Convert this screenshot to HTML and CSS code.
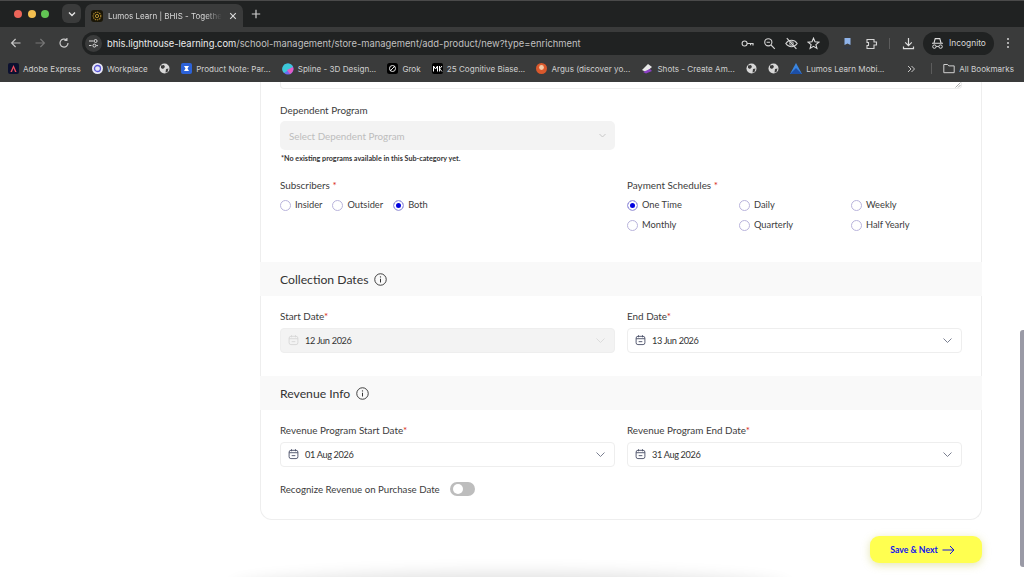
FILE: index.html
```html
<!DOCTYPE html>
<html lang="en">

<head>
  <meta charset="UTF-8">
  <meta name="viewport" content="width=device-width, initial-scale=1.0">
  <title>Lumos Learn | BHIS</title>
  <link rel="stylesheet" href="styles.css">
</head>

<body>
  <header class="browser">
    <div class="tabstrip">
      <div class="traffic">
        <span class="dot red"></span>
        <span class="dot yellow"></span>
        <span class="dot green"></span>
      </div>
      <div class="tabsearch">
        <svg width="10" height="10" viewBox="0 0 10 10"><path d="M2 3.5 5 6.5 8 3.5" fill="none" stroke="#e4e4e4" stroke-width="1.4"/></svg>
      </div>
      <div class="tab">
        <svg class="favicon" width="12" height="12" viewBox="0 0 12 12">
          <rect width="12" height="12" rx="3" fill="#1a1608"/>
          <circle cx="6" cy="6" r="3.8" fill="none" stroke="#a8842a" stroke-width="1.2" stroke-dasharray="1.4 .8"/>
          <circle cx="6" cy="6" r="1.6" fill="none" stroke="#c79f35" stroke-width=".9"/>
        </svg>
        <span class="tabtitle">Lumos Learn | BHIS - Togethe</span>
        <svg class="tabclose" width="8" height="8" viewBox="0 0 8 8"><path d="M1.2 1.2 6.8 6.8M6.8 1.2 1.2 6.8" stroke="#dcdcdc" stroke-width="1.1"/></svg>
      </div>
      <svg class="newtab" width="10" height="10" viewBox="0 0 10 10"><path d="M5 .8V9.2M.8 5H9.2" stroke="#cfcfcf" stroke-width="1.2"/></svg>
    </div>

    <div class="toolbar">
      <svg class="navicon" width="12" height="12" viewBox="0 0 12 12"><path d="M10.5 6H1.8M5.6 2 1.6 6 5.6 10" fill="none" stroke="#c8c8c8" stroke-width="1.2"/></svg>
      <svg class="navicon" width="12" height="12" viewBox="0 0 12 12"><path d="M1.5 6H10.2M6.4 2 10.4 6 6.4 10" fill="none" stroke="#767676" stroke-width="1.2"/></svg>
      <svg class="navicon" width="12" height="12" viewBox="0 0 12 12"><path d="M10 6A4 4 0 1 1 8.6 3M8.9 .9V3.4H6.4" fill="none" stroke="#c8c8c8" stroke-width="1.2"/></svg>
      <div class="omnibox">
        <span class="sitebtn">
          <svg width="11" height="11" viewBox="0 0 11 11"><path d="M1 3H5.5M1 7.5H3.5" stroke="#d8d8d8" stroke-width="1.1"/><circle cx="7.6" cy="3" r="1.5" fill="none" stroke="#d8d8d8"/><circle cx="6.4" cy="7.6" r="1.5" fill="none" stroke="#d8d8d8"/><path d="M8.2 7.6H10" stroke="#d8d8d8"/></svg>
        </span>
        <span class="url">bhis.lighthouse-learning.com<span class="urlpath">/school-management/store-management/add-product/new?type=enrichment</span></span>
        <div class="omni-icons">
          <svg width="13" height="13" viewBox="0 0 13 13"><circle cx="3.6" cy="6.5" r="2.5" fill="none" stroke="#d4d4d4" stroke-width="1.1"/><path d="M6 6.5H12V8.6M9.6 6.5V8.2" fill="none" stroke="#d4d4d4" stroke-width="1.2"/></svg>
          <svg width="13" height="13" viewBox="0 0 13 13"><circle cx="5.3" cy="5.3" r="3.6" fill="none" stroke="#d4d4d4" stroke-width="1.1"/><path d="M8 8 11.8 11.8M3.6 5.3H7" stroke="#d4d4d4" stroke-width="1.1"/></svg>
          <svg width="13" height="13" viewBox="0 0 13 13"><path d="M.8 6.5C3.6 2.2 9.4 2.2 12.2 6.5 9.4 10.8 3.6 10.8.8 6.5Z" fill="none" stroke="#d4d4d4" stroke-width="1.1"/><circle cx="6.5" cy="6.5" r="1.8" fill="none" stroke="#d4d4d4"/><path d="M1.8 1.2 11.4 11.8" stroke="#d4d4d4" stroke-width="1.2"/></svg>
          <svg width="13" height="13" viewBox="0 0 13 13"><path d="M6.5 1.2 8 4.8 11.9 5.1 8.9 7.6 9.9 11.4 6.5 9.4 3.1 11.4 4.1 7.6 1.1 5.1 5 4.8Z" fill="none" stroke="#dedede" stroke-width="1.1"/></svg>
        </div>
      </div>
      <svg class="ext" width="11" height="13" viewBox="0 0 11 13"><path d="M2.5 1H8.5V8L5.5 6.4 2.5 8Z" fill="#8fb4ea"/><rect x="2" y="9.5" width="7" height="2.5" fill="#333a46"/></svg>
      <svg class="puzzle" width="13" height="13" viewBox="0 0 13 13"><path d="M2 2.5H9V5H11.5V8H9V11.5H2V8.5H3.5V5.5H2Z" fill="none" stroke="#d4d4d4" stroke-width="1.1"/></svg>
      <span class="tool-sep"></span>
      <svg class="download" width="13" height="13" viewBox="0 0 13 13"><path d="M6.5 1V8.4M3.2 5.4 6.5 8.7 9.8 5.4M1.5 9.5V11.6H11.5V9.5" fill="none" stroke="#dedede" stroke-width="1.2"/></svg>
      <div class="incognito">
        <svg width="13" height="13" viewBox="0 0 13 13"><path d="M1 6.2H12M3 5.8 4.2 1.6H8.8L10 5.8" fill="none" stroke="#dedede" stroke-width="1.1"/><circle cx="3.4" cy="9.6" r="1.7" fill="none" stroke="#dedede"/><circle cx="9.6" cy="9.6" r="1.7" fill="none" stroke="#dedede"/><path d="M5.1 9.4H7.9" stroke="#dedede"/></svg>
        <span>Incognito</span>
      </div>
      <svg class="kebab" width="4" height="12" viewBox="0 0 4 12"><circle cx="2" cy="2" r="1" fill="#d4d4d4"/><circle cx="2" cy="6" r="1" fill="#d4d4d4"/><circle cx="2" cy="10" r="1" fill="#d4d4d4"/></svg>
    </div>

    <div class="bookmarks">
      <a class="bm bm-adobe">
        <svg width="11" height="11" viewBox="0 0 11 11"><rect width="11" height="11" rx="2" fill="#0c1130"/><path d="M5.5 2 8.6 9H7L5.5 5 4 9H2.4Z" fill="#ef4b5d"/></svg>
        Adobe Express</a>
      <a class="bm bm-work">
        <svg width="11" height="11" viewBox="0 0 11 11"><circle cx="5.5" cy="5.5" r="5.5" fill="#e8e8f6"/><circle cx="5.5" cy="5.5" r="3" fill="none" stroke="#5a55d6" stroke-width="1.3"/></svg>
        Workplace</a>
      <a class="bm bm-globe">
        <svg width="11" height="11" viewBox="0 0 11 11"><circle cx="5.5" cy="5.5" r="5" fill="#d8d8d8"/><path d="M2 2.5 5 2 6 4 4 6 2 5ZM7 6 9.5 5.5 8.5 9 6.5 9.5Z" fill="#3c3c3c"/></svg>
      </a>
      <a class="bm bm-note">
        <svg width="11" height="11" viewBox="0 0 11 11"><rect width="11" height="11" rx="2" fill="#2c62d8"/><path d="M3 3H8L6.5 5.5 8 8H3L4.5 5.5Z" fill="#fff"/></svg>
        Product Note: Par...</a>
      <a class="bm bm-spline">
        <svg width="12" height="12" viewBox="0 0 12 12"><circle cx="6" cy="6" r="5.5" fill="#6d6cf0"/><path d="M6 .5A5.5 5.5 0 0 1 11 4L2 10A5.5 5.5 0 0 1 6 .5Z" fill="#3cc7d8"/><path d="M11 4A5.5 5.5 0 0 1 8 11L5 7Z" fill="#e35cc4"/></svg>
        Spline - 3D Design...</a>
      <a class="bm bm-grok">
        <svg width="11" height="11" viewBox="0 0 11 11"><rect width="11" height="11" rx="2.5" fill="#000"/><circle cx="5.5" cy="5.5" r="3" fill="none" stroke="#e4e4e4"/><path d="M3 8 8 3" stroke="#e4e4e4"/></svg>
        Grok</a>
      <a class="bm bm-cog">
        <svg width="11" height="11" viewBox="0 0 11 11"><rect width="11" height="11" rx="2" fill="#000"/><path d="M1.5 8.5V3L3.5 6 5.5 3V8.5M7.5 3V8.5M10 3 7.7 5.8 10 8.5" fill="none" stroke="#fff" stroke-width="1"/></svg>
        25 Cognitive Biase...</a>
      <a class="bm bm-argus">
        <svg width="11" height="11" viewBox="0 0 11 11"><circle cx="5.5" cy="5.5" r="5.5" fill="#d9582c"/><circle cx="5.5" cy="4.5" r="2.4" fill="#f2c9a6"/></svg>
        Argus (discover yo...</a>
      <a class="bm bm-shots">
        <svg width="12" height="11" viewBox="0 0 12 11"><path d="M1 7 7 1 11 4 5 9Z" fill="#e8e8e8"/><path d="M2 9 9 6 11 8 5 10.5Z" fill="#8b3fc4"/></svg>
        Shots - Create Am...</a>
      <a class="bm bm-globe">
        <svg width="11" height="11" viewBox="0 0 11 11"><circle cx="5.5" cy="5.5" r="5" fill="#d8d8d8"/><path d="M2 2.5 5 2 6 4 4 6 2 5ZM7 6 9.5 5.5 8.5 9 6.5 9.5Z" fill="#3c3c3c"/></svg>
      </a>
      <a class="bm bm-globe">
        <svg width="11" height="11" viewBox="0 0 11 11"><circle cx="5.5" cy="5.5" r="5" fill="#d8d8d8"/><path d="M2 2.5 5 2 6 4 4 6 2 5ZM7 6 9.5 5.5 8.5 9 6.5 9.5Z" fill="#3c3c3c"/></svg>
      </a>
      <a class="bm bm-lumos">
        <svg width="12" height="11" viewBox="0 0 12 11"><path d="M6 0 12 11H0Z" fill="#3a86e0"/><path d="M6 5 12 11H0Z" fill="#1c4fa8"/></svg>
        Lumos Learn Mobi...</a>
      <div class="bm-end">
        <svg width="8" height="8" viewBox="0 0 8 8"><path d="M1 1 4 4 1 7M4.5 1 7.5 4 4.5 7" fill="none" stroke="#c8c8c8"/></svg>
        <span class="bm-sep"></span>
        <a class="bm bm-all">
          <svg width="12" height="11" viewBox="0 0 12 11"><path d="M.8 1.5H4.6L5.8 2.9H11.2V9.7H.8Z" fill="none" stroke="#cfcfcf" stroke-width="1"/></svg>
          All Bookmarks</a>
      </div>
    </div>
  </header>

  <main class="page">
    <div class="page-inner">
      <section class="card">
        <div class="textarea-end">
          <svg width="6" height="6" viewBox="0 0 6 6"><path d="M.5 5.5 5.5.5M3 5.5 5.5 3" stroke="#8a8a8a" stroke-width=".7"/></svg>
        </div>

        <div class="body-top">
          <div class="field-half">
            <label class="label">Dependent Program</label>
            <div class="select disabled">
              <span>Select Dependent Program</span>
              <svg class="chev" width="9" height="9" viewBox="0 0 9 9"><path d="M1.5 3 4.5 6 7.5 3" fill="none" stroke="#c8c8c8"/></svg>
            </div>
            <p class="note">*No existing programs available in this Sub-category yet.</p>
          </div>

          <div class="two-col options">
            <div>
              <label class="label">Subscribers <em>*</em></label>
              <div class="radio-inline">
                <span class="radio"><i></i>Insider</span>
                <span class="radio"><i></i>Outsider</span>
                <span class="radio on"><i></i>Both</span>
              </div>
            </div>
            <div>
              <label class="label">Payment Schedules <em>*</em></label>
              <div class="radio-grid">
                <span class="radio on"><i></i>One Time</span>
                <span class="radio"><i></i>Daily</span>
                <span class="radio"><i></i>Weekly</span>
                <span class="radio"><i></i>Monthly</span>
                <span class="radio"><i></i>Quarterly</span>
                <span class="radio"><i></i>Half Yearly</span>
              </div>
            </div>
          </div>
        </div>

        <div class="band">
          <h2>Collection Dates</h2>
          <svg width="13" height="13" viewBox="0 0 14 14"><circle cx="7" cy="7" r="6.2" fill="none" stroke="#333" stroke-width="1"/><path d="M7 6.2V10.2" stroke="#333" stroke-width="1.1"/><circle cx="7" cy="4.2" r=".7" fill="#333"/></svg>
        </div>
        <div class="two-col dates">
          <div>
            <label class="label">Start Date<em>*</em></label>
            <div class="date disabled">
              <svg width="11" height="12" viewBox="0 0 12 12"><rect x="1.2" y="2" width="9.6" height="9" rx="2" fill="none" stroke="#d6d6d6"/><path d="M1.2 4.6H10.8M3.8 .8V3M8.2 .8V3M4 7.8H8" stroke="#d6d6d6"/></svg>
              <span>12 Jun 2026</span>
              <svg class="chev" width="11" height="11" viewBox="0 0 11 11"><path d="M1.5 3.5 5.5 7.5 9.5 3.5" fill="none" stroke="#dcdcdc"/></svg>
            </div>
          </div>
          <div>
            <label class="label">End Date<em>*</em></label>
            <div class="date">
              <svg width="11" height="12" viewBox="0 0 12 12"><rect x="1.2" y="2" width="9.6" height="9" rx="2" fill="none" stroke="#4a5068"/><path d="M1.2 4.6H10.8M3.8 .8V3M8.2 .8V3M4 7.8H8" stroke="#4a5068"/></svg>
              <span>13 Jun 2026</span>
              <svg class="chev" width="11" height="11" viewBox="0 0 11 11"><path d="M1.5 3.5 5.5 7.5 9.5 3.5" fill="none" stroke="#7a7f90"/></svg>
            </div>
          </div>
        </div>

        <div class="band">
          <h2>Revenue Info</h2>
          <svg width="13" height="13" viewBox="0 0 14 14"><circle cx="7" cy="7" r="6.2" fill="none" stroke="#333" stroke-width="1"/><path d="M7 6.2V10.2" stroke="#333" stroke-width="1.1"/><circle cx="7" cy="4.2" r=".7" fill="#333"/></svg>
        </div>
        <div class="two-col dates">
          <div>
            <label class="label">Revenue Program Start Date<em>*</em></label>
            <div class="date">
              <svg width="11" height="12" viewBox="0 0 12 12"><rect x="1.2" y="2" width="9.6" height="9" rx="2" fill="none" stroke="#4a5068"/><path d="M1.2 4.6H10.8M3.8 .8V3M8.2 .8V3M4 7.8H8" stroke="#4a5068"/></svg>
              <span>01 Aug 2026</span>
              <svg class="chev" width="11" height="11" viewBox="0 0 11 11"><path d="M1.5 3.5 5.5 7.5 9.5 3.5" fill="none" stroke="#7a7f90"/></svg>
            </div>
          </div>
          <div>
            <label class="label">Revenue Program End Date<em>*</em></label>
            <div class="date">
              <svg width="11" height="12" viewBox="0 0 12 12"><rect x="1.2" y="2" width="9.6" height="9" rx="2" fill="none" stroke="#4a5068"/><path d="M1.2 4.6H10.8M3.8 .8V3M8.2 .8V3M4 7.8H8" stroke="#4a5068"/></svg>
              <span>31 Aug 2026</span>
              <svg class="chev" width="11" height="11" viewBox="0 0 11 11"><path d="M1.5 3.5 5.5 7.5 9.5 3.5" fill="none" stroke="#7a7f90"/></svg>
            </div>
          </div>
        </div>
        <div class="recognize">
          <span>Recognize Revenue on Purchase Date</span>
          <span class="toggle"></span>
        </div>
      </section>

      <div class="actions">
        <button class="save">Save &amp; Next
          <svg width="13" height="10" viewBox="0 0 13 10"><path d="M.5 5H12M8 1 12 5 8 9" fill="none" stroke="#1414e0" stroke-width="1"/></svg>
        </button>
      </div>
    </div>
    <div class="bottom-fade"></div>
    <div class="scrollbar"></div>
  </main>
</body>

</html>
```

FILE: styles.css
```css
* {
  margin: 0;
  padding: 0;
  box-sizing: border-box;
}

html,
body {
  width: 1024px;
  height: 577px;
  overflow: hidden;
}

body {
  font-family: Lato, "Open Sans", sans-serif;
  background: #fff;
  color: #333;
}

/* browser chrome */
.browser {
  height: 82px;
  font-family: Inter, "Liberation Sans", sans-serif;
  color: #d8d8d8;
}

.tabstrip {
  height: 27px;
  background: #202222;
  border-top: 1px solid #4a4a4a;
  display: flex;
  align-items: center;
  padding: 0 0 1px 14px;
}

.traffic {
  display: flex;
  gap: 5.5px;
  width: 48px;
}

.dot {
  width: 8px;
  height: 8px;
  border-radius: 50%;
}

.red { background: #ec6559; }
.yellow { background: #f4bf4f; }
.green { background: #62c554; }

.tabsearch {
  width: 19px;
  height: 19px;
  border-radius: 6px;
  background: #3a3b3b;
  display: flex;
  align-items: center;
  justify-content: center;
}

.tab {
  width: 158px;
  height: 23px;
  margin: 0 0 -1px 4px;
  padding: 0 10px 0 6px;
  background: #3a3b3b;
  border-radius: 7px 7px 0 0;
  align-self: flex-end;
  display: flex;
  align-items: center;
  font-size: 8px;
}

.favicon,
.tabclose {
  flex: none;
}

.tabtitle {
  width: 114px;
  margin-left: 5px;
  margin-right: 7px;
  flex: none;
  white-space: nowrap;
  -webkit-mask-image: linear-gradient(90deg, #000 85%, transparent);
  mask-image: linear-gradient(90deg, #000 85%, transparent);
}

.newtab {
  margin-left: 8px;
}

.toolbar {
  height: 33px;
  background: #3a3b3b;
  display: flex;
  align-items: center;
  padding: 0 0 1px 10px;
}

.navicon {
  margin-right: 12px;
}

.omnibox {
  width: 747px;
  height: 23px;
  background: #202222;
  border-radius: 12px;
  display: flex;
  align-items: center;
  padding-left: 3px;
}

.sitebtn {
  width: 17px;
  height: 17px;
  border-radius: 50%;
  background: #3a3b3b;
  display: flex;
  align-items: center;
  justify-content: center;
  margin-right: 5px;
}

.url {
  font-size: 9.4px;
  color: #ececec;
  white-space: nowrap;
}

.urlpath {
  color: #c0c0c0;
}

.omni-icons {
  margin-left: auto;
  display: flex;
  gap: 9px;
  padding-right: 9px;
}

.ext {
  margin-left: 13px;
}

.puzzle {
  margin-left: 12px;
}

.tool-sep {
  width: 1px;
  height: 11px;
  background: #5c5c5c;
  margin-left: 11px;
}

.download {
  margin-left: 12px;
}

.incognito {
  width: 71px;
  height: 23px;
  margin-left: 8px;
  border-radius: 12px;
  background: #202222;
  display: flex;
  align-items: center;
  justify-content: center;
  gap: 5px;
  font-size: 8.4px;
}

.kebab {
  margin-left: 12px;
}

.bookmarks {
  height: 22px;
  background: #3a3b3b;
  display: flex;
  align-items: center;
  padding: 0 10px 5px 8px;
  font-size: 8.1px;
  color: #cfcfcf;
}

.bm {
  display: flex;
  align-items: center;
  gap: 4px;
  white-space: nowrap;
  margin-right: 11.2px;
}

.bm-end {
  margin-left: auto;
  display: flex;
  align-items: center;
}

.bm-sep {
  width: 1px;
  height: 11px;
  background: #5c5c5c;
  margin: 0 11px 0 16px;
}

.bm-all {
  margin-right: 0;
}

/* page */
.page {
  position: relative;
  height: 495px;
  overflow: hidden;
}

.page-inner {
  width: 722px;
  margin-left: 260px;
}

.card {
  height: 438px;
  border: 1px solid #eeeeee;
  border-top: 0;
  border-radius: 0 0 12px 12px;
}

.textarea-end {
  height: 7px;
  margin: 0 19px;
  border: 1px solid #eeeeee;
  border-top: 0;
  border-radius: 0 0 4px 4px;
  display: flex;
  justify-content: flex-end;
  align-items: flex-end;
}

.body-top {
  padding: 15px 19px 0;
  height: 173px;
}

.field-half {
  width: 335px;
}

.label {
  display: block;
  font-size: 9.9px;
  line-height: 12px;
  color: #3c3c3c;
}

.label em {
  font-style: normal;
  color: #d92d20;
}

.select {
  height: 29px;
  margin-top: 5px;
  padding: 0 8px 0 9px;
  border-radius: 5px;
  display: flex;
  align-items: center;
  justify-content: space-between;
  font-size: 9.8px;
}

.select.disabled {
  background: #f3f3f3;
  color: #bdbdbd;
}

.note {
  margin-top: 4px;
  padding-left: 1px;
  font-size: 7.2px;
  font-weight: 700;
  line-height: 9px;
  color: #333;
}

.two-col {
  display: grid;
  grid-template-columns: 335px 335px;
  column-gap: 12px;
}

.options {
  margin-top: 16px;
}

.radio {
  display: flex;
  align-items: center;
  gap: 4px;
  font-size: 9.3px;
  line-height: 12px;
  color: #3c3c3c;
}

.radio i {
  width: 11px;
  height: 11px;
  border: 1px solid #b9b4dc;
  border-radius: 50%;
  background: #fff;
  flex: none;
}

.radio.on i {
  background: #0000e0;
  box-shadow: inset 0 0 0 2px #fff;
}

.radio-inline {
  margin-top: 8px;
  display: flex;
  gap: 10px;
}

.radio-grid {
  margin-top: 8px;
  display: grid;
  grid-template-columns: 112px 112px 112px;
  row-gap: 8px;
}

.band {
  height: 34px;
  padding: 0 20px;
  margin: 0 -1px;
  background: #f9f9f9;
  display: flex;
  align-items: center;
  gap: 6px;
}

.band h2 {
  font-size: 12.2px;
  font-weight: 400;
  color: #333;
}

.dates {
  padding: 14px 19px 0;
  height: 80px;
}

.date {
  height: 24.5px;
  margin-top: 6px;
  padding: 0 8px 0 7px;
  border: 1px solid #eeeeee;
  border-radius: 4px;
  display: flex;
  align-items: center;
  gap: 6px;
  font-size: 9.2px;
  letter-spacing: -0.35px;
  color: #333;
}

.date .chev {
  margin-left: auto;
}

.date.disabled {
  background: #f3f3f3;
}

.recognize {
  padding-left: 19px;
  margin-top: -8px;
  display: flex;
  align-items: center;
  gap: 10px;
  font-size: 9.7px;
  color: #3c3c3c;
}

.toggle {
  position: relative;
  width: 25px;
  height: 14px;
  border-radius: 7px;
  background: #bdbdbd;
}

.toggle::after {
  content: '';
  position: absolute;
  top: 2px;
  left: 3px;
  width: 10px;
  height: 10px;
  border-radius: 50%;
  background: #fff;
}

.actions {
  margin-top: 16px;
  display: flex;
  justify-content: flex-end;
}

.save {
  width: 112px;
  height: 27px;
  padding-right: 7px;
  border: 0;
  border-radius: 9px;
  background: #ffff50;
  box-shadow: 0 2px 8px rgba(190, 190, 60, 0.4);
  color: #1010f0;
  font-family: Lato, sans-serif;
  font-size: 8.7px;
  font-weight: 700;
  display: flex;
  align-items: center;
  justify-content: center;
  gap: 4px;
}

/* bits that lie over the page */
.bottom-fade {
  position: absolute;
  left: 235px;
  bottom: -24px;
  width: 550px;
  height: 24px;
  border-radius: 50%;
  box-shadow: 0 0 16px 4px rgba(0, 0, 0, 0.12);
}

.scrollbar {
  position: absolute;
  right: 0;
  top: 248px;
  width: 4px;
  height: 237px;
  border-radius: 3px 0 0 3px;
  background: #9a9aa6;
}
```
